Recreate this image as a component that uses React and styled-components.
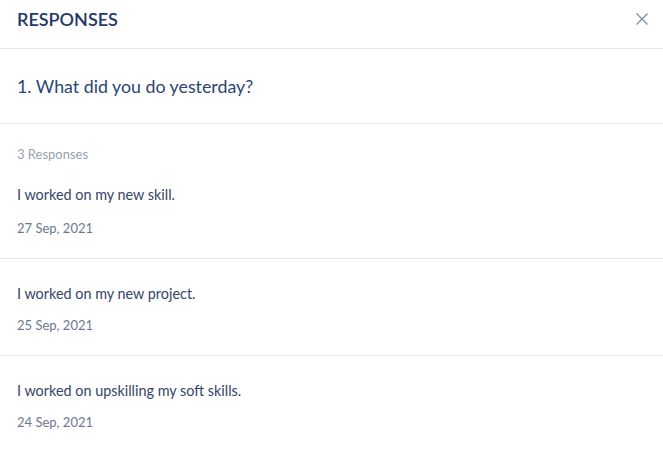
import React from "react";
import styled, { createGlobalStyle } from "styled-components";

const GlobalStyle = createGlobalStyle`
  body {
    margin: 0;
    background: #ffffff;
    font-family: Lato, "Open Sans", sans-serif;
  }
`;

const Panel = styled.div`
  width: 663px;
  height: 450px;
  background: #fff;
  overflow: hidden;
`;

const Header = styled.div`
  height: 49px;
  box-sizing: border-box;
  display: flex;
  align-items: center;
  justify-content: space-between;
  padding: 0 14px 11px 17px;
  border-bottom: 1px solid #e4e6ea;
`;

const Title = styled.h1`
  margin: 0;
  font-size: 18px;
  font-weight: 600;
  color: #22396a;
  letter-spacing: 0;
`;

const CloseButton = styled.button`
  border: 0;
  background: none;
  padding: 0;
  width: 14px;
  height: 14px;
  display: flex;
  cursor: pointer;
`;

const Question = styled.div`
  height: 74px;
  display: flex;
  align-items: center;
  padding: 0 17px;
  border-bottom: 1px solid #e4e6ea;
  font-size: 17.8px;
  color: #2a4575;
`;

const Count = styled.div`
  padding: 21px 17px 0;
  font-size: 13px;
  line-height: 18px;
  color: #98a1b0;
`;

const Item = styled.div`
  padding: ${(p) => (p.$first ? "22px 17px 21px" : "25px 17px 21px")};
  border-bottom: ${(p) => (p.$last ? "none" : "1px solid #e4e6ea")};
`;

const ItemText = styled.div`
  font-size: 14.4px;
  line-height: 20px;
  color: #34466b;
`;

const ItemDate = styled.div`
  margin-top: ${(p) => (p.$first ? "14px" : "12px")};
  font-size: 13px;
  line-height: 18px;
  color: #6b7891;
`;

const responses = [
  { text: "I worked on my new skill.", date: "27 Sep, 2021" },
  { text: "I worked on my new project.", date: "25 Sep, 2021" },
  { text: "I worked on upskilling my soft skills.", date: "24 Sep, 2021" },
];

export default function App() {
  return (
    <Panel>
      <GlobalStyle />
      <Header>
        <Title>RESPONSES</Title>
        <CloseButton aria-label="Close">
          <svg width="14" height="14" viewBox="0 0 14 14">
            <path d="M1.5 1.5 L12.5 12.5 M12.5 1.5 L1.5 12.5" stroke="#7c8aa3" strokeWidth="1.2" fill="none" />
          </svg>
        </CloseButton>
      </Header>
      <Question>1. What did you do yesterday?</Question>
      <Count>3 Responses</Count>
      {responses.map((r, i) => (
        <Item key={i} $first={i === 0} $last={i === responses.length - 1}>
          <ItemText>{r.text}</ItemText>
          <ItemDate $first={i === 0}>{r.date}</ItemDate>
        </Item>
      ))}
    </Panel>
  );
}
